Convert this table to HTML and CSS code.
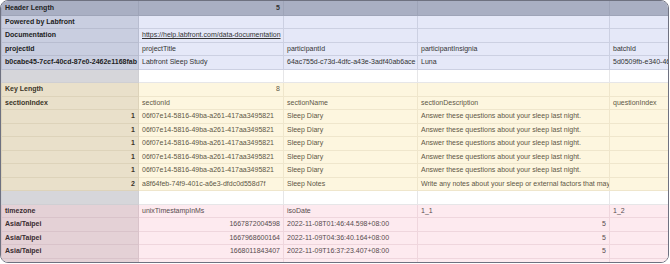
FILE: index.html
```html
<!DOCTYPE html>
<html lang="en">
<head>
  <meta charset="UTF-8" />
  <title>Labfront export</title>
  <link rel="stylesheet" href="styles.css">
</head>
<body>
  <div class="sheet">
    <table class="grid">
      <colgroup>
        <col class="c1"><col class="c2"><col class="c3"><col class="c4"><col class="c5">
      </colgroup>
      <tbody>
        <!-- header block -->
        <tr class="top">
          <th>Header Length</th><td class="num b">5</td><td></td><td></td><td></td>
        </tr>
        <tr class="blue">
          <th>Powered by Labfront</th><td></td><td></td><td></td><td></td>
        </tr>
        <tr class="blue">
          <th>Documentation</th><td><a href="#">https://help.labfront.com/data-documentation</a></td><td></td><td></td><td></td>
        </tr>
        <tr class="blue">
          <th>projectId</th><td>projectTitle</td><td>participantId</td><td>participantInsignia</td><td>batchId</td>
        </tr>
        <tr class="blue">
          <th>b0cabe45-7ccf-40cd-87e0-2462e1168fab</th><td>Labfront Sleep Study</td><td>64ac755d-c73d-4dfc-a43e-3adf40ab6ace</td><td>Luna</td><td>5d0509fb-e340-46c1-9a2f-77b1c0d3e812</td>
        </tr>
        <tr class="gap">
          <th></th><td></td><td></td><td></td><td></td>
        </tr>

        <!-- key block -->
        <tr class="yellow">
          <th>Key Length</th><td class="num">8</td><td></td><td></td><td></td>
        </tr>
        <tr class="yellow">
          <th>sectionIndex</th><td>sectionId</td><td>sectionName</td><td>sectionDescription</td><td>questionIndex</td>
        </tr>
        <tr class="yellow">
          <th class="num">1</th><td>06f07e14-5816-49ba-a261-417aa3495821</td><td>Sleep Diary</td><td>Answer these questions about your sleep last night.</td><td></td>
        </tr>
        <tr class="yellow">
          <th class="num">1</th><td>06f07e14-5816-49ba-a261-417aa3495821</td><td>Sleep Diary</td><td>Answer these questions about your sleep last night.</td><td></td>
        </tr>
        <tr class="yellow">
          <th class="num">1</th><td>06f07e14-5816-49ba-a261-417aa3495821</td><td>Sleep Diary</td><td>Answer these questions about your sleep last night.</td><td></td>
        </tr>
        <tr class="yellow">
          <th class="num">1</th><td>06f07e14-5816-49ba-a261-417aa3495821</td><td>Sleep Diary</td><td>Answer these questions about your sleep last night.</td><td></td>
        </tr>
        <tr class="yellow">
          <th class="num">1</th><td>06f07e14-5816-49ba-a261-417aa3495821</td><td>Sleep Diary</td><td>Answer these questions about your sleep last night.</td><td></td>
        </tr>
        <tr class="yellow">
          <th class="num">2</th><td>a8f64feb-74f9-401c-a6e3-dfdc0d558d7f</td><td>Sleep Notes</td><td>Write any notes about your sleep or external factors that may have affected it.</td><td></td>
        </tr>
        <tr class="gap">
          <th></th><td></td><td></td><td></td><td></td>
        </tr>

        <!-- data block -->
        <tr class="pink">
          <th>timezone</th><td>unixTimestampInMs</td><td>isoDate</td><td>1_1</td><td>1_2</td>
        </tr>
        <tr class="pink">
          <th>Asia/Taipei</th><td class="num">1667872004598</td><td>2022-11-08T01:46:44.598+08:00</td><td class="num">5</td><td></td>
        </tr>
        <tr class="pink">
          <th>Asia/Taipei</th><td class="num">1667968600164</td><td>2022-11-09T04:36:40.164+08:00</td><td class="num">5</td><td></td>
        </tr>
        <tr class="pink">
          <th>Asia/Taipei</th><td class="num">1668011843407</td><td>2022-11-09T16:37:23.407+08:00</td><td class="num">5</td><td></td>
        </tr>
        <tr class="pink">
          <th>Asia/Taipei</th><td class="num">1668054921380</td><td>2022-11-10T04:35:21.380+08:00</td><td class="num">5</td><td></td>
        </tr>
      </tbody>
    </table>
  </div>
</body>
</html>
```

FILE: styles.css
```css
body {
  margin: 0;
  background: #ffffff;
  font-family: "Liberation Sans", Arial, sans-serif;
}
.sheet {
  width: 667px;
  height: 261px;
  border: 1px solid #6e7180;
  border-radius: 8px;
  overflow: hidden;
  background: #ffffff;
}
.grid {
  border-collapse: collapse;
  table-layout: fixed;
  width: 760px;
}
.c1 { width: 137px; }
.c2 { width: 145px; }
.c3 { width: 134px; }
.c4 { width: 192px; }
.c5 { width: 152px; }

/* rows alternate 14/13px so the pitch averages 13.5px */
.grid tr {
  height: 13px;
}
.grid tr:nth-child(odd) {
  height: 14px;
}
.grid th, .grid td {
  padding: 0 3px;
  font-size: 7px;
  line-height: 12px;
  white-space: nowrap;
  overflow: hidden;
  text-align: left;
  border: 1px solid #d4d8e8;
  color: #333333;
}
.grid th {
  font-weight: bold;
  color: #222222;
}
.grid .num {
  text-align: right;
}
.grid .b {
  font-weight: bold;
}
.grid a {
  color: #333333;
  text-decoration: underline;
}

/* header row */
.top th, .top td {
  background: #a9afc3;
  border-color: #9ea4b8;
  border-top: none;
}

/* project info block */
.blue th {
  background: #c9cee0;
  border-color: #b8bdd0;
}
.blue td {
  background: #e5e8f8;
  border-color: #ccd0e2;
}

/* spacer rows */
.gap th {
  background: #d6d6da;
  border-color: #cfcfd3;
}
.gap td {
  background: #ffffff;
  border-color: #e6e6e8;
}

/* key block */
.yellow th {
  background: #e9e0ca;
  border-color: #ddd3ba;
  color: #3b3428;
}
.yellow td {
  background: #fdf6df;
  border-color: #efe6cc;
  color: #5e5646;
}

/* data block */
.pink th {
  background: #e4d1d6;
  border-color: #d9c3ca;
  color: #3a2c30;
}
.pink td {
  background: #fdeaef;
  border-color: #efd6dd;
  color: #574b4e;
}
```
